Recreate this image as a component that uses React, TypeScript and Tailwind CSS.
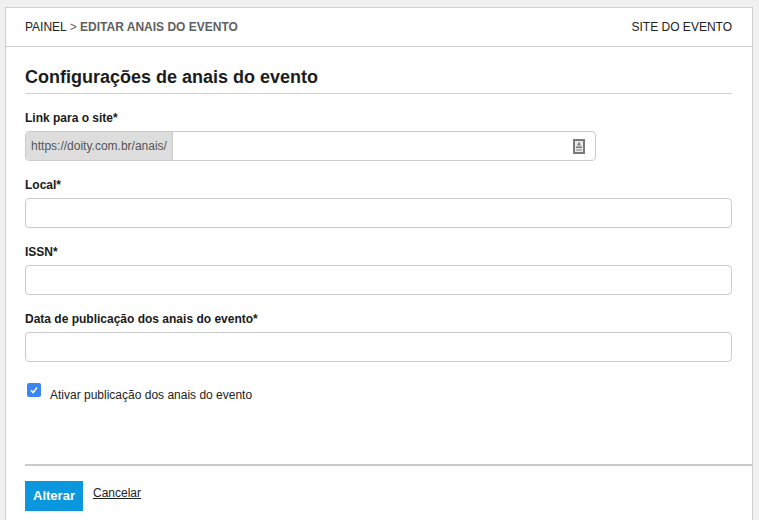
function Field({ label }: { label: string }) {
  return (
    <div className="mb-[14px]">
      <label className="block h-[20px] text-[12px] leading-[20px] font-bold text-[#1a1a1a]">{label}</label>
      <input className="mt-[3px] block h-[30px] w-full rounded-[4px] border border-[#cccccc] bg-white" />
    </div>
  );
}

export default function App() {
  return (
    <div className="h-[520px] overflow-hidden bg-[#f0f0f0] pt-[7px] pl-[5px] pr-[6px] font-['Liberation_Sans',Arial,sans-serif]">
      <div className="h-[513px] border border-b-0 border-[#cfcfcf] bg-white">
        <div className="flex h-[39px] items-center justify-between border-b border-[#cfcfcf] pl-[19px] pr-[20px] text-[12px] text-[#222222]">
          <div>
            PAINEL <span className="text-[#666666]">&gt;</span> <b className="text-[#5f5f5f]">EDITAR ANAIS DO EVENTO</b>
          </div>
          <a>SITE DO EVENTO</a>
        </div>

        <div className="pl-[19px] pr-[20px]">
          <h1 className="mt-[19px] h-[28px] border-b border-[#cfcfcf] text-[18px] leading-[22px] font-bold text-[#1c1c1c]">
            Configurações de anais do evento
          </h1>

          <div className="mt-[14px] mb-[14px]">
            <label className="block h-[20px] text-[12px] leading-[20px] font-bold text-[#1a1a1a]">Link para o site*</label>
            <div className="mt-[3px] flex h-[30px] w-[571px] overflow-hidden rounded-[4px] border border-[#cccccc]">
              <span className="flex w-[147px] items-center justify-center border-r border-[#cccccc] bg-[#dddddd] text-[12px] text-[#555555]">
                https://doity.com.br/anais/
              </span>
              <div className="flex flex-1 items-center justify-end pr-[10px]">
                <svg width="12" height="15" viewBox="0 0 12 15" aria-hidden="true">
                  <rect x="1" y="1" width="10" height="13" fill="#e8e8e8" stroke="#7a7a7a" strokeWidth="2" />
                  <path d="M6 2.5 L7.8 6.5 H4.2 Z" fill="#7a7a7a" />
                  <rect x="3" y="7.5" width="6" height="1.5" fill="#7a7a7a" />
                  <rect x="3" y="10" width="6" height="2" fill="#b5b5b5" />
                </svg>
              </div>
            </div>
          </div>

          <Field label="Local*" />
          <Field label="ISSN*" />
          <Field label="Data de publicação dos anais do evento*" />

          <div className="mt-[21px] flex items-start">
            <span className="ml-[2px] flex h-[14px] w-[14px] items-center justify-center rounded-[2px] bg-[#3a86f5]">
              <svg width="10" height="10" viewBox="0 0 10 10" fill="none" aria-hidden="true">
                <path d="M2 5.2 L4.2 7.5 L8 2.5" stroke="white" strokeWidth="1.5" />
              </svg>
            </span>
            <label className="mt-[5px] ml-[9px] text-[12px] leading-[14px] text-[#222222]">Ativar publicação dos anais do evento</label>
          </div>
        </div>

        <div className="mt-[62px] ml-[19px] border-t-2 border-[#cccccc] pt-[15px]">
          <div className="flex items-start">
            <button className="h-[30px] w-[58px] bg-[#0a97de] text-[13px] font-bold text-white">Alterar</button>
            <a className="ml-[10px] text-[12px] leading-[24px] text-[#222222] underline">Cancelar</a>
          </div>
        </div>
      </div>
    </div>
  );
}
